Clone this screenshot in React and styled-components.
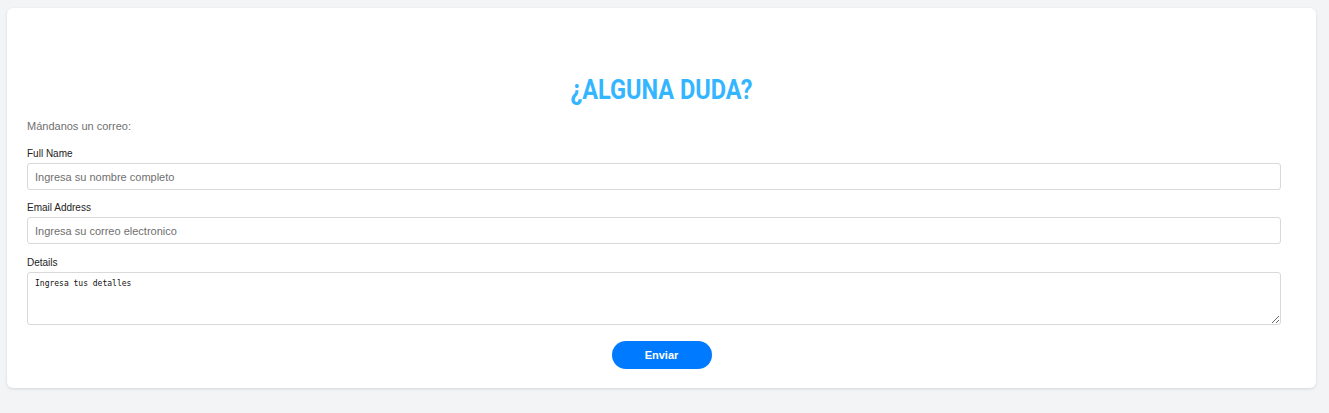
import React from "react";
import styled, { createGlobalStyle } from "styled-components";

const Global = createGlobalStyle`
  html, body { margin: 0; padding: 0; background: #f3f4f6; }
  body { font-family: "Liberation Sans", Arial, sans-serif; }
  * { box-sizing: border-box; }
`;

const Page = styled.div`
  padding: 8px 13px 24px 7px;
`;

const Card = styled.section`
  background: #ffffff;
  border-radius: 6px;
  box-shadow: 0 1px 3px rgba(0, 0, 0, 0.12);
  padding: 20px 20px 19px 20px;
`;

const Title = styled.h2`
  margin: 45px 0 12px;
  text-align: center;
  font-family: Roboto, "Liberation Sans", sans-serif;
  font-weight: 700;
  font-size: 28px;
  line-height: 34px;
  color: #33b5ff;
  transform: scaleX(0.84);
`;

const Intro = styled.p`
  margin: 0 0 14px;
  font-size: 11px;
  line-height: 14px;
  color: #707070;
`;

const Form = styled.form`
  display: flex;
  flex-direction: column;
`;

const Field = styled.div`
  display: flex;
  flex-direction: column;
  width: calc(100% - 15px);
  margin-bottom: ${(p) => p.$gap || 11}px;
`;

const Label = styled.label`
  font-size: 10px;
  line-height: 13px;
  color: #222;
  margin-bottom: 3px;
`;

const Input = styled.input`
  height: 27px;
  width: 100%;
  border: 1px solid #d9d9d9;
  border-radius: 3px;
  padding: 0 7px;
  font-family: "Liberation Sans", Arial, sans-serif;
  font-size: 11px;
  color: #333;
  outline: none;
  &::placeholder { color: #6f6f6f; }
`;

const TextArea = styled.textarea`
  height: 53px;
  width: 100%;
  border: 1px solid #d9d9d9;
  border-radius: 3px;
  padding: 6px 7px;
  font-family: "DejaVu Sans Mono", monospace;
  font-size: 8px;
  color: #222;
  outline: none;
  display: block;
  &::placeholder { color: #111; }
`;

const Actions = styled.div`
  display: flex;
  justify-content: center;
`;

const Button = styled.button`
  width: 100px;
  height: 28px;
  border: none;
  border-radius: 14px;
  background: #007bff;
  color: #fff;
  font-family: "Liberation Sans", Arial, sans-serif;
  font-weight: 700;
  font-size: 11px;
  cursor: pointer;
`;

export default function App() {
  return (
    <>
      <Global />
      <Page>
        <Card>
          <Title>¿ALGUNA DUDA?</Title>
          <Intro>Mándanos un correo:</Intro>
          <Form onSubmit={(e) => e.preventDefault()}>
            <Field $gap={11}>
              <Label>Full Name</Label>
              <Input placeholder="Ingresa su nombre completo" />
            </Field>
            <Field $gap={12}>
              <Label>Email Address</Label>
              <Input placeholder="Ingresa su correo electronico" />
            </Field>
            <Field $gap={16}>
              <Label>Details</Label>
              <TextArea placeholder="Ingresa tus detalles" />
            </Field>
            <Actions>
              <Button type="submit">Enviar</Button>
            </Actions>
          </Form>
        </Card>
      </Page>
    </>
  );
}
